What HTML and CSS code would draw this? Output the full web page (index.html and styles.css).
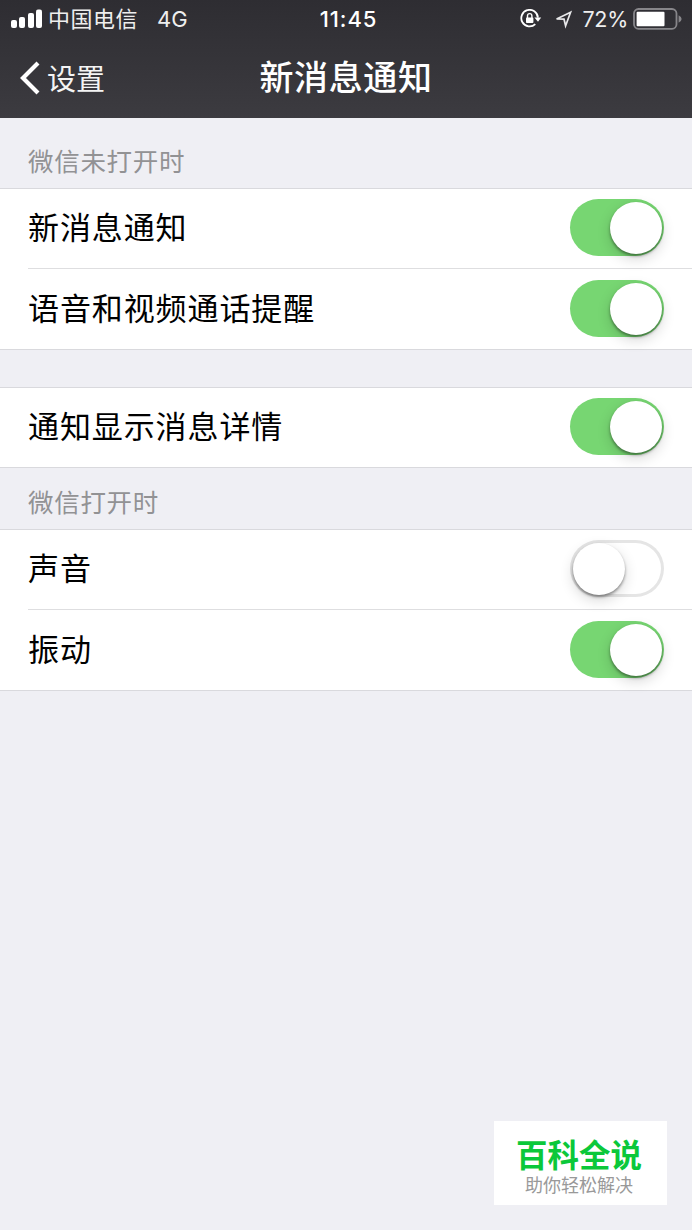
FILE: index.html
```html
<!DOCTYPE html>
<html lang="zh-CN">
<head>
    <meta charset="UTF-8">
    <meta name="viewport" content="width=device-width, initial-scale=1.0">
    <title>新消息通知</title>

    <link rel="stylesheet" href="styles.css">
</head>
<body>

    <header>
        <div class="status-bar">
            <div class="status-left">
                <svg class="signal" width="32" height="20" viewBox="0 0 32 20" fill="#fff">
                    <rect x="0" y="11" width="6" height="8" rx="2"/>
                    <rect x="8" y="8" width="6" height="11" rx="2"/>
                    <rect x="17" y="4" width="6" height="15" rx="2"/>
                    <rect x="25" y="0.5" width="6" height="18.5" rx="2"/>
                </svg>
                <span class="carrier">中国电信</span>
                <span class="network">4G</span>
            </div>
            <span class="time">11:45</span>
            <div class="status-right">
                <svg class="lock" width="22" height="20" viewBox="0 0 22 20" fill="none" stroke="#fff" stroke-width="1.8">
                    <path d="M15.3 15.2A8.3 8.3 0 1 1 17.9 8.6"/>
                    <path d="M14.4 8.6h6.8l-3.2 4.2z" fill="#fff" stroke="none"/>
                    <rect x="6" y="8.6" width="7.4" height="5.4" rx="0.8" fill="#fff" stroke="none"/>
                    <path d="M7.5 9V6.8a2.2 2.2 0 0 1 4.4 0V9" stroke-width="1.4"/>
                </svg>
                <svg class="location" width="19" height="19" viewBox="0 0 19 19" fill="none" stroke="#e8e8ea" stroke-width="1.7">
                    <path d="M16.6 2.2L2.6 9L10 9.2L11.6 15.8z"/>
                </svg>
                <span class="percent">72%</span>
                <svg class="battery" width="49" height="22" viewBox="0 0 49 22">
                    <rect x="1" y="1" width="42.5" height="19.8" rx="4.5" fill="none" stroke="#87868a" stroke-width="1.8"/>
                    <rect x="3.6" y="3.8" width="27.9" height="14.4" rx="1" fill="#fff"/>
                    <path d="M45.6 7.2Q48.6 8.6 48.6 11T45.6 14.8z" fill="#87868a"/>
                </svg>
            </div>
        </div>
        <nav class="nav-bar">
            <a class="back">
                <svg width="20" height="34" viewBox="0 0 20 34" fill="none" stroke="#fff" stroke-width="4.2">
                    <path d="M18 2L3 17L18 32"/>
                </svg>
                <span>设置</span>
            </a>
            <h1>新消息通知</h1>
        </nav>
    </header>

    <main>
        <h2 class="first">微信未打开时</h2>
        <div class="group">
            <div class="row">
                <span>新消息通知</span>
                <div class="switch on"><div class="knob"></div></div>
            </div>
            <div class="row">
                <span>语音和视频通话提醒</span>
                <div class="switch on"><div class="knob"></div></div>
            </div>
        </div>

        <div class="group spaced">
            <div class="row">
                <span>通知显示消息详情</span>
                <div class="switch on"><div class="knob"></div></div>
            </div>
        </div>

        <h2>微信打开时</h2>
        <div class="group">
            <div class="row">
                <span>声音</span>
                <div class="switch"><div class="knob"></div></div>
            </div>
            <div class="row">
                <span>振动</span>
                <div class="switch on"><div class="knob"></div></div>
            </div>
        </div>
    </main>

    <div class="watermark">
        <strong>百科全说</strong>
        <span>助你轻松解决</span>
    </div>

</body>
</html>
```
FILE: styles.css
```css
* {
    box-sizing: border-box;
}

body {
    margin: 0;
    height: 1230px;
    overflow: hidden;
    background-color: #efeff4;
    font-family: "Noto Sans CJK SC", sans-serif;
    color: #000;
}

header {
    height: 118px;
    background: linear-gradient(#2e2d32, #3c3b40);
    color: #fff;
}

.status-bar {
    height: 38px;
    display: grid;
    grid-template-columns: 1fr auto 1fr;
    align-items: center;
    padding: 0 10px 0 15px;
    font-size: 22px;
    line-height: 38px;
}

.status-left, .status-right {
    display: flex;
    align-items: center;
}

.status-left {
    margin-left: -4px;
}

.status-right {
    justify-content: flex-end;
}

.carrier {
    margin-left: 5px;
    padding-bottom: 3px;
    line-height: 35px;
    font-size: 22px;
    letter-spacing: 0.5px;
    color: #eee;
}

.network {
    margin-left: 19px;
    font-family: Inter, sans-serif;
    font-size: 22px;
    color: #eee;
}

.time {
    font-family: Inter, sans-serif;
    font-weight: 500;
    letter-spacing: 0.9px;
}

.location {
    margin-left: 12px;
}

.percent {
    margin-left: 10px;
    font-family: Inter, sans-serif;
    font-size: 21.5px;
    letter-spacing: -0.3px;
    color: #eee;
}

.battery {
    margin-left: 5px;
}

.nav-bar {
    height: 80px;
    display: grid;
    grid-template-columns: 1fr auto 1fr;
    align-items: center;
    padding: 0 20px;
}

.back {
    display: flex;
    align-items: center;
    font-size: 29px;
    line-height: 40px;
    color: #f4f4f4;
}

.back span {
    margin-left: 7px;
    padding-bottom: 3px;
}

h1 {
    margin: 0;
    padding-bottom: 5px;
    font-size: 34px;
    font-weight: 500;
    line-height: 44px;
    letter-spacing: 0.6px;
}

h2 {
    margin: 0;
    height: 61px;
    padding: 15px 28px 0;
    font-size: 25.5px;
    font-weight: 400;
    line-height: 36px;
    letter-spacing: 0.7px;
    color: #929294;
}

h2.first {
    height: 70px;
    padding-top: 24px;
}

.group {
    background-color: #fff;
    border-top: 1px solid #d9d9dd;
    border-bottom: 1px solid #d9d9dd;
}

.spaced {
    margin-top: 37px;
}

.row {
    height: 79px;
    margin-left: 28px;
    padding: 0 28px 2px 0;
    display: flex;
    align-items: center;
    justify-content: space-between;
    font-size: 31px;
    line-height: 44px;
    letter-spacing: 0.9px;
}

.row span {
    padding-bottom: 3px;
}

.row + .row {
    height: 81px;
    padding-bottom: 1px;
    border-top: 1px solid #dedee0;
}

.switch {
    width: 94px;
    height: 57px;
    padding: 3px;
    display: flex;
    border-radius: 29px;
    box-shadow: inset 0 0 0 3px #e5e5e5;
}

.switch.on {
    justify-content: flex-end;
    padding-right: 2px;
    background-color: #77d672;
    box-shadow: none;
}

.knob {
    width: 52px;
    height: 52px;
    border-radius: 50%;
    background-color: #fff;
    box-shadow: 0 2px 3px rgba(0, 0, 0, 0.4), 0 5px 14px rgba(0, 0, 0, 0.16);
}

.watermark {
    position: absolute;
    left: 494px;
    top: 1121px;
    width: 173px;
    height: 84px;
    padding: 12px 3px 0 0;
    display: flex;
    flex-direction: column;
    align-items: center;
    background-color: #fff;
}

.watermark strong {
    font-size: 31.5px;
    font-weight: 700;
    line-height: 40px;
    color: #0bc83a;
}

.watermark span {
    font-size: 18px;
    line-height: 22px;
    color: #999;
}
```
